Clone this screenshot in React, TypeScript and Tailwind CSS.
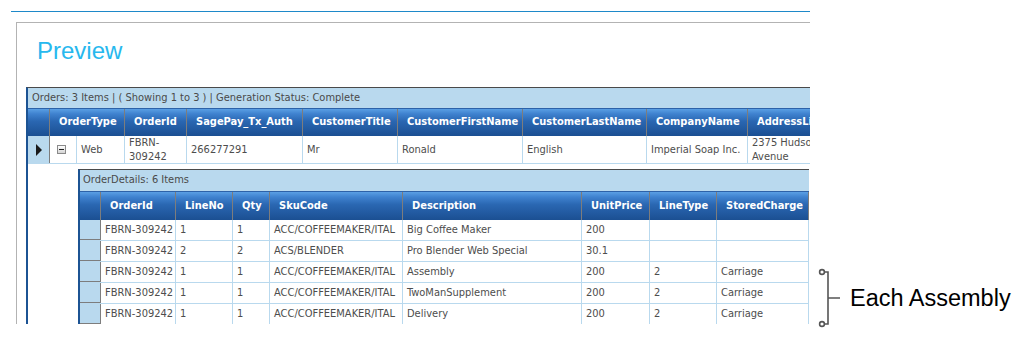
import type { ReactNode } from "react";

const gridFont = "font-['DejaVu_Sans_Condensed','Tahoma','DejaVu_Sans',sans-serif]";

const outerCols = [
  { key: "OrderType", w: "w-[75px]" },
  { key: "OrderId", w: "w-[62px]" },
  { key: "SagePay_Tx_Auth", w: "w-[116px]" },
  { key: "CustomerTitle", w: "w-[95px]" },
  { key: "CustomerFirstName", w: "w-[125px]" },
  { key: "CustomerLastName", w: "w-[124px]" },
  { key: "CompanyName", w: "w-[101px]" },
  { key: "AddressLine1", w: "w-[120px]" },
];

const innerCols = [
  { key: "OrderId", w: "w-[75px]" },
  { key: "LineNo", w: "w-[57px]" },
  { key: "Qty", w: "w-[37px]" },
  { key: "SkuCode", w: "w-[133px]" },
  { key: "Description", w: "w-[179px]" },
  { key: "UnitPrice", w: "w-[68px]" },
  { key: "LineType", w: "w-[67px]" },
  { key: "StoredCharge", w: "w-[92px]" },
];

const details = [
  ["FBRN-309242", "1", "1", "ACC/COFFEEMAKER/ITAL", "Big Coffee Maker", "200", "", ""],
  ["FBRN-309242", "2", "2", "ACS/BLENDER", "Pro Blender Web Special", "30.1", "", ""],
  ["FBRN-309242", "1", "1", "ACC/COFFEEMAKER/ITAL", "Assembly", "200", "2", "Carriage"],
  ["FBRN-309242", "1", "1", "ACC/COFFEEMAKER/ITAL", "TwoManSupplement", "200", "2", "Carriage"],
  ["FBRN-309242", "1", "1", "ACC/COFFEEMAKER/ITAL", "Delivery", "200", "2", "Carriage"],
];

const headerBg =
  "bg-[linear-gradient(to_bottom,#5a9fe4_0%,#3f82cf_18%,#2a67b2_45%,#1b4f92_100%)]";

function HeadCell({ w, children }: { w: string; children?: ReactNode }) {
  return (
    <div
      className={`${w} shrink-0 h-full border-r border-[#7d7d7d] pl-[9px] flex items-center whitespace-nowrap overflow-hidden text-white font-bold`}
    >
      {children}
    </div>
  );
}

function Cell({ w, children }: { w: string; children?: ReactNode }) {
  return (
    <div
      className={`${w} shrink-0 h-full border-r border-[#b9d9ee] px-[4px] flex items-center whitespace-nowrap overflow-hidden`}
    >
      {children}
    </div>
  );
}

function ExpandIcon() {
  return (
    <span className="w-[9px] h-[9px] border border-[#8a8a8a] bg-[linear-gradient(to_bottom,#ffffff,#d4d4d4)] flex items-center justify-center">
      <span className="w-[5px] h-px bg-[#222]" />
    </span>
  );
}

function OrdersGrid() {
  return (
    <div
      className={`ml-[9px] mt-[32px] border-l-2 border-l-[#1c5393] border-t border-t-[#4a4a4a] ${gridFont} text-[11px]`}
    >
      <div className="h-[21px] bg-[#b9d9ee] border-b border-[#2d62a8] pl-[4px] flex items-center text-[#4a4a4a] whitespace-nowrap">
        Orders: 3 Items | ( Showing 1 to 3 ) | Generation Status: Complete
      </div>
      <div className={`h-[27px] flex ${headerBg}`}>
        <HeadCell w="w-[22px]" />
        {outerCols.map((c) => (
          <HeadCell key={c.key} w={c.w}>
            {c.key}
          </HeadCell>
        ))}
      </div>
      <div className="h-[28px] flex border-b border-[#b9d9ee] text-[#4d4d4d] leading-[14px]">
        <div className="w-[22px] shrink-0 h-full bg-[#b9d9ee] border-r border-[#7d7d7d] flex items-center justify-center">
          <span className="w-0 h-0 border-y-[6px] border-y-transparent border-l-[6px] border-l-[#1a1a1a] ml-[1px]" />
        </div>
        <div className="w-[27px] shrink-0 h-full border-r border-[#b9d9ee] flex items-center pl-[7px]">
          <ExpandIcon />
        </div>
        <Cell w="w-[48px]">Web</Cell>
        <Cell w="w-[62px]">
          <span className="whitespace-normal">
            FBRN-
            <br />
            309242
          </span>
        </Cell>
        <Cell w="w-[116px]">266277291</Cell>
        <Cell w="w-[95px]">Mr</Cell>
        <Cell w="w-[125px]">Ronald</Cell>
        <Cell w="w-[124px]">English</Cell>
        <Cell w="w-[101px]">Imperial Soap Inc.</Cell>
        <Cell w="w-[120px]">
          <span className="whitespace-normal">
            2375 Hudson
            <br />
            Avenue
          </span>
        </Cell>
      </div>
      <div className="pl-[50px] pt-[5px]">
        <div className="border-l-2 border-l-[#1c5393] border-t border-t-[#4a4a4a] w-[731px]">
          <div className="h-[22px] bg-[#b9d9ee] border-b border-[#2d62a8] pl-[3px] flex items-center text-[#4a4a4a]">
            OrderDetails: 6 Items
          </div>
          <div className={`h-[28px] flex ${headerBg}`}>
            <HeadCell w="w-[21px]" />
            {innerCols.map((c) => (
              <HeadCell key={c.key} w={c.w}>
                {c.key}
              </HeadCell>
            ))}
          </div>
          {details.map((r, i) => (
            <div key={i} className="h-[21px] flex border-b border-[#b9d9ee] text-[#4d4d4d]">
              <div className="w-[21px] shrink-0 h-full bg-[#b9d9ee] border-r border-[#7d7d7d] -mb-px border-b border-b-[#7d7d7d]" />
              {innerCols.map((c, j) => (
                <Cell key={c.key} w={c.w}>
                  {r[j]}
                </Cell>
              ))}
            </div>
          ))}
        </div>
      </div>
    </div>
  );
}

export default function App() {
  return (
    <div className="w-[1036px] h-[340px] bg-white flex overflow-hidden">
      <div className="w-[810px] shrink-0 pt-[11px]">
        <div className="ml-[11px] h-px bg-[#1e89c9]" />
        <div className="ml-[16px] mt-[10px] h-[302px] border-t border-l border-[#b3b3b3] overflow-hidden">
          <h1 className="pl-[20px] pt-[14px] h-[32px] text-[24px] leading-[28px] text-[#27b8ee] font-['Liberation_Sans',Arial,sans-serif]">
            Preview
          </h1>
          <OrdersGrid />
        </div>
      </div>
      <div className="pt-[268px] pl-[8px] flex items-start">
        <div className="flex items-center h-[60px] gap-[8px]">
          <svg width="24" height="60" viewBox="0 0 24 60" fill="none" stroke="#555" strokeWidth="1.6">
            <circle cx="4" cy="4" r="2.4" />
            <circle cx="4" cy="56" r="2.4" />
            <path d="M6.4 4 H10 V56 H6.4 M10 30 H22" />
          </svg>
          <span className="text-[23.5px] leading-[28px] text-black font-['Liberation_Sans',Arial,sans-serif] whitespace-nowrap">
            Each Assembly
          </span>
        </div>
      </div>
    </div>
  );
}
